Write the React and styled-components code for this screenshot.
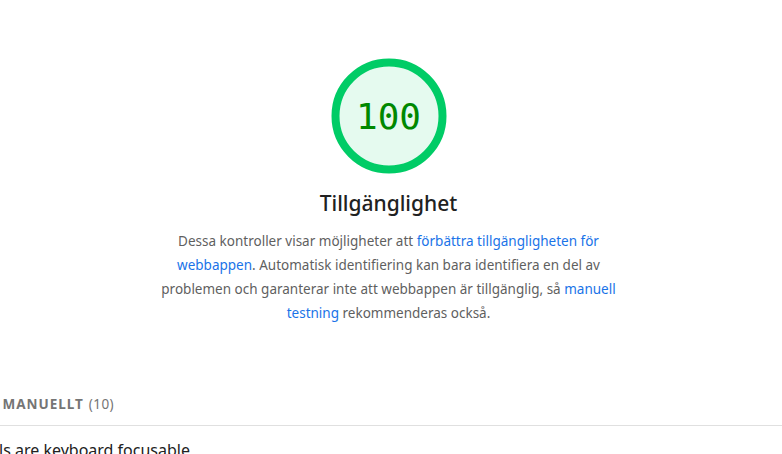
import React from 'react';
import styled, { createGlobalStyle } from 'styled-components';

const GlobalStyle = createGlobalStyle`
  html, body {
    margin: 0;
    padding: 0;
    background: #ffffff;
  }
  body {
    font-family: 'Noto Sans', 'Open Sans', Arial, sans-serif;
    color: #212121;
    overflow: hidden;
  }
`;

const Page = styled.div`
  width: 782px;
  height: 454px;
  overflow: hidden;
  display: flex;
  flex-direction: column;
`;

const Header = styled.header`
  display: flex;
  flex-direction: column;
  align-items: center;
  padding: 58px 5px 0 0;
`;

const GaugeWrap = styled.div`
  position: relative;
  width: 116px;
  height: 116px;
`;

const Gauge = styled.svg`
  display: block;
  width: 116px;
  height: 116px;
`;

const Score = styled.div`
  position: absolute;
  inset: 0;
  display: flex;
  align-items: center;
  justify-content: center;
  font-family: 'DejaVu Sans Mono', 'Liberation Mono', monospace;
  font-size: 36px;
  color: #008800;
`;

const Title = styled.h2`
  margin: 15px 0 0;
  font-size: 21px;
  line-height: 28px;
  font-weight: 500;
  color: #212121;
`;

const Description = styled.p`
  margin: 12px 0 0;
  max-width: 470px;
  text-align: center;
  font-size: 13.5px;
  line-height: 24px;
  color: #5f5f5f;
`;

const Link = styled.a`
  color: #1a73e8;
  text-decoration: none;
`;

const GroupHeader = styled.div`
  margin-top: 69px;
  padding-bottom: 11px;
  border-bottom: 1px solid #e0e0e0;
  display: flex;
`;

const Clip = styled.div`
  width: ${(p) => p.end}px;
  overflow: hidden;
  display: flex;
  justify-content: flex-end;
  white-space: nowrap;
  flex-shrink: 0;
`;

const GroupTitle = styled.span`
  font-size: 13.5px;
  line-height: 20px;
  font-weight: 700;
  letter-spacing: 1px;
  text-transform: uppercase;
  color: #757575;
`;

const Count = styled.span`
  font-weight: 400;
  letter-spacing: 0.4px;
  margin-left: 5px;
`;

const AuditRow = styled.div`
  display: flex;
  padding-top: 12px;
`;

const AuditTitle = styled.span`
  font-size: 16px;
  line-height: 24px;
  color: #212121;
`;

function App() {
  return (
    <Page>
      <GlobalStyle />
      <Header>
        <GaugeWrap>
          <Gauge viewBox="0 0 116 116">
            <circle cx="58" cy="58" r="53.5" fill="#00cc66" fillOpacity="0.1" />
            <circle cx="58" cy="58" r="53.5" fill="none" stroke="#00cc66" strokeWidth="8" />
          </Gauge>
          <Score>100</Score>
        </GaugeWrap>
        <Title>Tillgänglighet</Title>
        <Description>
          Dessa kontroller visar möjligheter att{' '}
          <Link href="#">förbättra tillgängligheten för webbappen</Link>. Automatisk identifiering kan
          bara identifiera en del av problemen och garanterar inte att webbappen är tillgänglig, så{' '}
          <Link href="#">manuell testning</Link> rekommenderas också.
        </Description>
      </Header>
      <GroupHeader>
        <Clip end={114}>
          <GroupTitle>
            Ytterligare poster att kontrollera manuellt<Count>(10)</Count>
          </GroupTitle>
        </Clip>
      </GroupHeader>
      <AuditRow>
        <Clip end={190}>
          <AuditTitle>Interactive controls are keyboard focusable</AuditTitle>
        </Clip>
      </AuditRow>
    </Page>
  );
}

export default App;
